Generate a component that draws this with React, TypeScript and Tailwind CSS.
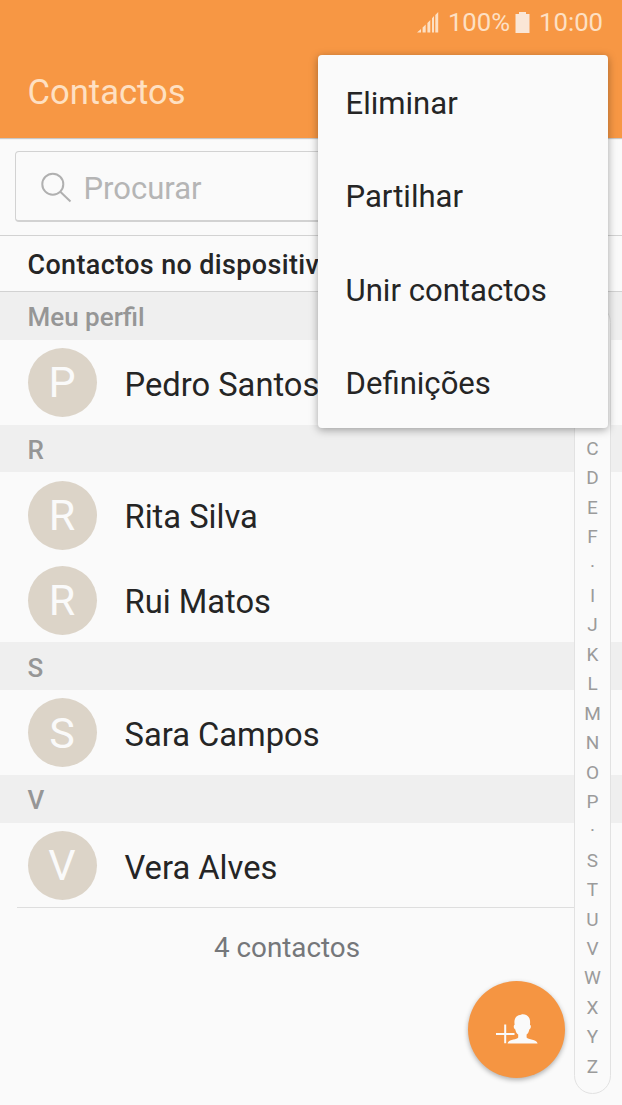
const sections = [
  { title: 'Meu perfil', names: ['Pedro Santos'] },
  { title: 'R', names: ['Rita Silva', 'Rui Matos'] },
  { title: 'S', names: ['Sara Campos'] },
  { title: 'V', names: ['Vera Alves'] },
];

const indexLetters = '&#ABCDEF·IJKLMNOP·STUVWXYZ'.split('');

const menuItems = ['Eliminar', 'Partilhar', 'Unir contactos', 'Definições'];

function StatusBar() {
  return (
    <div className="flex h-11 items-center justify-end pr-[19px] text-[25.7px] leading-[44px] text-[#fde0c4]">
      <svg className="mr-[9px] h-[22px] w-[22px]" viewBox="0 0 22 22" fill="currentColor">
        <path d="M0 21.5 4 18V21.5ZM5.6 16.4 8.7 13.6V21.5H5.6ZM10.4 11.9 13.3 9.1V21.5H10.4ZM15 7.2 17 5V21.5H15ZM18.3 4 21.2 1V21.5H18.3Z" />
      </svg>
      <span>100%</span>
      <svg className="mr-[9px] ml-[5px] h-[21px] w-[15px]" viewBox="0 0 15 21" fill="#fae6d6">
        <path d="M4 0H11V2H14.5V21H0.5V2H4Z" />
      </svg>
      <span>10:00</span>
    </div>
  );
}

function SearchBox() {
  return (
    <div className="mx-[15px] mt-[13px] flex h-[71px] items-center rounded-[4px] border border-b-2 border-[#d2d2d2] pl-[25px]">
      <svg className="mt-[3px] h-[32px] w-[32px]" viewBox="0 0 32 32" fill="none" stroke="#b0b0b0" strokeWidth="2">
        <circle cx="11.8" cy="12.2" r="10.5" />
        <path d="M19.3 19.8 29.5 29.5" />
      </svg>
      <span className="ml-[10.5px] pt-[6px] text-[31px] text-[#b5b5b5]">Procurar</span>
    </div>
  );
}

function ContactRow({ name }: { name: string }) {
  return (
    <div className="flex h-[85px] items-center pt-[0.4px] pl-[27.5px]">
      <div className="flex size-[69px] items-center justify-center rounded-full bg-[#dcd4c8] pt-px text-[43px] leading-none text-[#fafafa]">
        {name[0]}
      </div>
      <span className="ml-[28px] pt-[5.5px] text-[32.7px] text-[#252525]">{name}</span>
    </div>
  );
}

function AlphabetIndex() {
  return (
    <div className="absolute top-[304px] left-[574px] flex h-[790px] w-[37px] flex-col items-center rounded-full border border-[#e2e2e2] bg-[#fafafa] pt-[11.2px] text-[19px] text-[#9b9b9b]">
      {indexLetters.map((letter, i) => (
        <span key={i} className="h-[29.43px] shrink-0 leading-[29.43px]">{letter}</span>
      ))}
    </div>
  );
}

function AddButton() {
  return (
    <button className="absolute top-[980.5px] left-[468px] flex size-[97px] items-center justify-center rounded-full bg-[#f59542] pt-[2px] shadow-[0_2px_5px_rgba(0,0,0,0.3)]">
      <svg className="h-[32px] w-[44px]" viewBox="0 0 44 32" fill="#fafafa">
        <path d="M1 18.9H19.5V20.9H1ZM9.2 10.6H11.2V29.2H9.2Z" />
        <path d="M27 0.2C31.8-.2 35.3 3 35.1 8.4L35 11C36.4 11 36 14.8 34.3 15.4C33.8 18 32.9 19.4 31.6 20.6V23.4C33 26 41.8 24.5 42.6 29.5H12.6C13.4 24.5 21.8 26 23.2 23.4V20.6C21.8 19.4 20.8 18 20.3 15.4C18.6 14.8 18.2 11 19.6 11L19.4 8.3C19.3 4.5 21.5 1.3 25 1C25.8.9 26.2.3 27 .2Z" />
      </svg>
    </button>
  );
}

function OverflowMenu() {
  return (
    <div className="absolute top-[55px] left-[318px] flex h-[373px] w-[290px] flex-col rounded-[4px] bg-[#fafafa] pt-[3px] shadow-[0_2px_8px_rgba(0,0,0,0.35)]">
      {menuItems.map((item) => (
        <div key={item} className="flex h-[93.2px] shrink-0 items-center pl-[27.5px] text-[31.1px] text-[#252525]">
          {item}
        </div>
      ))}
    </div>
  );
}

export default function App() {
  return (
    <div className="relative h-[1105px] w-[622px] overflow-hidden bg-[#fafafa] font-['Roboto',sans-serif]">
      <header className="h-[138px] bg-[#f79744] shadow-[0_1px_1px_rgba(0,0,0,0.2)]">
        <StatusBar />
        <h1 className="pt-[23px] pl-[27.5px] text-[34.6px] leading-[50px] text-[#fee0c2]">Contactos</h1>
      </header>
      <SearchBox />
      <div className="mt-[13px] flex h-[57px] items-center border-y border-[#d2d2d2] pt-[3px] pl-[27.5px] font-medium text-[#252525]">
        <span className="text-[26.9px] tracking-[0.4px]">Contactos no dispositivo</span>
      </div>
      <main>
        {sections.map((section) => (
          <section key={section.title}>
            <h2 className="flex h-[47.7px] items-center bg-[#efefef] pt-[3px] pl-[27.5px] text-[26px] leading-none font-medium text-[#969696]">
              {section.title}
            </h2>
            {section.names.map((name) => (
              <ContactRow key={name} name={name} />
            ))}
          </section>
        ))}
      </main>
      <div className="-mt-[0.8px] ml-[17px] h-px w-[557px] bg-[#dedede]" />
      <p className="w-[574px] pt-[20px] text-center text-[27.8px] leading-[40px] text-[#75777a]">4 contactos</p>
      <AlphabetIndex />
      <AddButton />
      <OverflowMenu />
    </div>
  );
}
